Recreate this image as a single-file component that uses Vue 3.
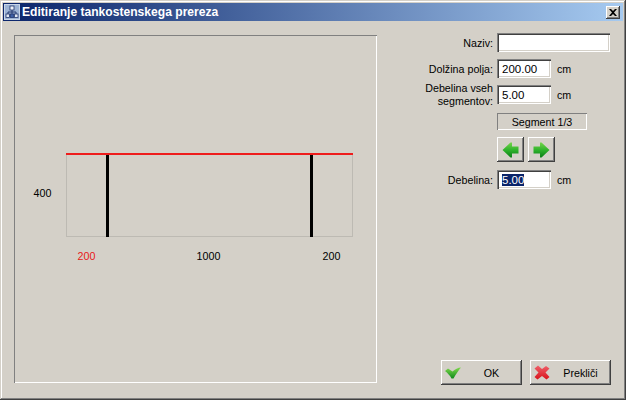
<script setup>
import { ref, onMounted } from 'vue'

const thickness = ref(null)

onMounted(() => {
  thickness.value.focus()
  thickness.value.select()
})
</script>

<template>
  <div class="window">
    <header class="titlebar">
      <svg class="app-icon" viewBox="0 0 16 16" width="16" height="16">
        <rect x="0" y="0" width="16" height="16" fill="#9db3d4" />
        <rect x="0.500" y="0.500" width="15" height="15" fill="none" stroke="#c9d6e8" />
        <path d="M8 5V8M4 11V8H12V11M8 8V11" fill="none" stroke="#24386e" />
        <rect x="6" y="2" width="4" height="4" fill="#eef2f8" stroke="#24386e" stroke-width="0.800" />
        <rect x="2" y="10" width="3.500" height="3.500" fill="#dfe7f2" stroke="#24386e" stroke-width="0.800" />
        <rect x="6.300" y="10" width="3.500" height="3.500" fill="#3d5fa6" stroke="#24386e" stroke-width="0.800" />
        <rect x="10.500" y="10" width="3.500" height="3.500" fill="#dfe7f2" stroke="#24386e" stroke-width="0.800" />
      </svg>
      <span class="title-text">Editiranje tankostenskega prereza</span>
      <button class="close" aria-label="Zapri">
        <svg viewBox="0 0 8 7" width="8" height="7">
          <path d="M0 0h2l2 2 2-2h2L5 3.500 8 7H6L4 5 2 7H0l3-3.500z" fill="#000" />
        </svg>
      </button>
    </header>

    <main class="content">
      <section class="canvas">
        <svg class="diagram" viewBox="0 0 363 348" width="363" height="348">
          <rect x="52.500" y="118.500" width="286" height="83" fill="none" stroke="#bdbab3" />
          <rect x="92" y="119" width="3" height="83" fill="#000" />
          <rect x="296" y="119" width="3" height="83" fill="#000" />
          <rect x="52" y="118" width="287" height="2" fill="#ee1c1c" />
          <text x="28.500" y="162" class="dim">400</text>
          <text x="72.500" y="225" class="dim red">200</text>
          <text x="194.500" y="225" class="dim">1000</text>
          <text x="317.500" y="225" class="dim">200</text>
        </svg>
      </section>

      <aside class="side">
        <form class="form" @submit.prevent>
          <label class="label" for="naziv">Naziv:</label>
          <input id="naziv" class="input wide" type="text" />

          <label class="label" for="dolzina">Dolžina polja:</label>
          <input id="dolzina" class="input" type="text" value="200.00" />
          <span class="unit">cm</span>

          <label class="label two-line" for="vsi">Debelina vseh<br />segmentov:</label>
          <input id="vsi" class="input" type="text" value="5.00" />
          <span class="unit">cm</span>

          <div class="segment">Segment 1/3</div>

          <div class="nav">
            <button class="btn nav-btn" type="button" aria-label="Nazaj">
              <svg viewBox="0 0 17 16" width="17" height="16">
                <defs>
                  <linearGradient id="arrow-l" x1="0" y1="0" x2="0" y2="1">
                    <stop offset="0" stop-color="#74d44a" />
                    <stop offset="0.500" stop-color="#2fb32c" />
                    <stop offset="1" stop-color="#0a7f16" />
                  </linearGradient>
                </defs>
                <path d="M0.500 8L8.500 0.500H10V4.500H16.500V11.500H10V15.500H8.500z" fill="url(#arrow-l)" />
              </svg>
            </button>
            <button class="btn nav-btn" type="button" aria-label="Naprej">
              <svg viewBox="0 0 17 16" width="17" height="16">
                <defs>
                  <linearGradient id="arrow-r" x1="0" y1="0" x2="0" y2="1">
                    <stop offset="0" stop-color="#74d44a" />
                    <stop offset="0.500" stop-color="#2fb32c" />
                    <stop offset="1" stop-color="#0a7f16" />
                  </linearGradient>
                </defs>
                <path d="M16.500 8L8.500 0.500H7V4.500H0.500V11.500H7V15.500H8.500z" fill="url(#arrow-r)" />
              </svg>
            </button>
          </div>

          <label class="label" for="debelina">Debelina:</label>
          <input id="debelina" ref="thickness" class="input" type="text" value="5.00" />
          <span class="unit">cm</span>
        </form>

        <div class="actions">
          <button class="btn action" type="button">
            <svg class="action-icon" viewBox="0 0 16 12" width="16" height="12">
              <defs>
                <linearGradient id="check" x1="0" y1="0" x2="0" y2="1">
                  <stop offset="0" stop-color="#7ed84c" />
                  <stop offset="1" stop-color="#0f8a1c" />
                </linearGradient>
              </defs>
              <path d="M0 4L3 1.500 7.500 4.500C10 2.500 13 0.500 16 0.500 13.500 3.500 11 7 8.500 11.500H6.500C5 8.500 2.500 6 0 4z" fill="url(#check)" />
            </svg>
            <span class="action-text">OK</span>
          </button>
          <button class="btn action" type="button">
            <svg class="action-icon" viewBox="0 0 16 15" width="16" height="15">
              <defs>
                <linearGradient id="cross" x1="0" y1="0" x2="0" y2="1">
                  <stop offset="0" stop-color="#f0606a" />
                  <stop offset="1" stop-color="#d8141c" />
                </linearGradient>
              </defs>
              <path d="M0.500 3.500L4 0.500 8 4 12 1 15.500 3.500 11.500 7.500 15.500 12 12.500 14.500 8 11 3.500 14.500 0.500 12 4.500 7.500z" fill="url(#cross)" />
            </svg>
            <span class="action-text">Prekliči</span>
          </button>
        </div>
      </aside>
    </main>
  </div>
</template>

<style scoped>
.window {
  box-sizing: border-box;
  width: 626px;
  height: 400px;
  display: flex;
  flex-direction: column;
  padding: 3px 3px 2px;
  background: #d4d0c8;
  box-shadow: inset -1px -1px 0 #404040, inset 1px 1px 0 #d4d0c8, inset -2px -2px 0 #808080, inset 2px 2px 0 #fff;
  font-family: "Liberation Sans", Arial, sans-serif;
  font-size: 10.700px;
  color: #000;
}

.titlebar {
  height: 18px;
  display: flex;
  align-items: center;
  padding: 0 3px 0 1px;
  background: linear-gradient(90deg, #0a246a, #a6caf0);
}

.app-icon {
  flex: none;
}

.title-text {
  flex: 1;
  margin-left: 2px;
  color: #fff;
  font-weight: 700;
  font-size: 12.100px;
}

.close {
  width: 14px;
  height: 13px;
  padding: 0;
  border: 0;
  display: flex;
  align-items: center;
  justify-content: center;
  background: #d4d0c8;
  box-shadow: inset -1px -1px 0 #404040, inset 1px 1px 0 #fff, inset -2px -2px 0 #808080;
}

.content {
  flex: 1;
  display: flex;
  gap: 20px;
  padding: 12px 12px 13px 11px;
  min-height: 0;
}

.canvas {
  flex: none;
  width: 363px;
  margin: 2px 0;
  box-shadow: inset 1px 1px 0 #808080, inset -1px -1px 0 #fff;
}

.diagram {
  display: block;
}

.dim {
  font-size: 10.700px;
  text-anchor: middle;
  fill: #000;
}

.red {
  fill: #e81818;
}

.side {
  flex: 1;
  display: flex;
  flex-direction: column;
  justify-content: space-between;
}

.form {
  display: grid;
  grid-template-columns: 96px 54px 1fr;
  grid-template-rows: 19px 19px 19px 19px 26px 19px;
  column-gap: 4px;
  row-gap: 7px;
  align-items: center;
}

.label {
  justify-self: end;
  text-align: right;
  white-space: nowrap;
}

.two-line {
  line-height: 13px;
}

.input {
  box-sizing: border-box;
  width: 54px;
  height: 19px;
  padding: 1px 2px 0 5px;
  border: 0;
  outline: 0;
  border-radius: 0;
  background: #fff;
  font: inherit;
  font-size: 11.500px;
  color: #000;
  box-shadow: inset 1px 1px 0 #808080, inset 2px 2px 0 #404040, inset -1px -1px 0 #fff, inset -2px -2px 0 #d4d0c8;
}

.input::selection {
  background: #0a246a;
  color: #fff;
}

.wide {
  grid-column: 2 / 4;
  width: 113px;
}

.unit {
  padding-left: 2px;
}

.segment {
  grid-column: 2 / 4;
  align-self: end;
  box-sizing: border-box;
  width: 90px;
  height: 17px;
  display: flex;
  align-items: center;
  justify-content: center;
  box-shadow: inset 1px 1px 0 #808080, inset -1px -1px 0 #fff;
}

.nav {
  grid-column: 2 / 4;
  align-self: start;
  display: flex;
  gap: 4px;
}

.btn {
  padding: 0;
  border: 0;
  background: #d4d0c8;
  font: inherit;
  color: #000;
  box-shadow: inset -1px -1px 0 #404040, inset 1px 1px 0 #fff, inset -2px -2px 0 #808080;
}

.nav-btn {
  width: 27px;
  height: 25px;
  display: flex;
  align-items: center;
  justify-content: center;
}

.actions {
  display: flex;
  justify-content: flex-end;
  gap: 8px;
}

.action {
  width: 81px;
  height: 25px;
  padding-left: 4px;
  display: flex;
  align-items: center;
}

.action-icon {
  flex: none;
}

.action-text {
  flex: 1;
  text-align: center;
}
</style>

<style>
html, body {
  margin: 0;
  background: #d4d0c8;
}
</style>
